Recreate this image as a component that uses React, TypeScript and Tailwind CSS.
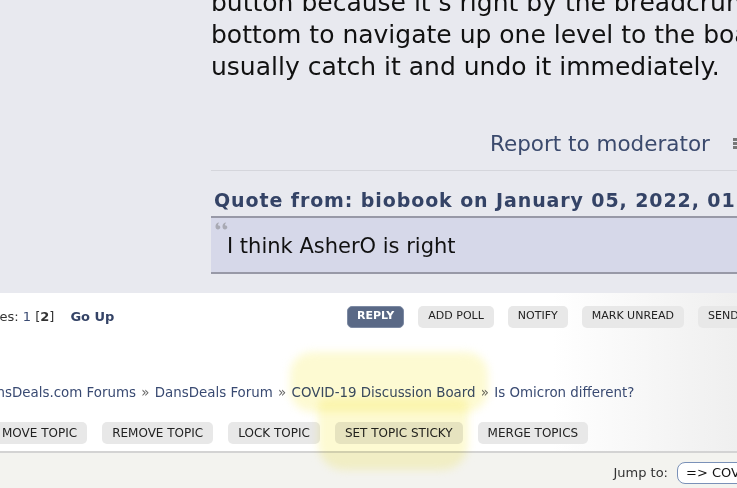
import React from 'react'

const font = { fontFamily: '"DejaVu Sans", Verdana, sans-serif' }

function TopButton({ label, primary }: { label: string; primary?: boolean }) {
  if (primary) {
    return (
      <span className="inline-flex h-[22px] items-center rounded-[5px] border border-[#7d8aa3] bg-[#5a6986] px-[9px] text-[11px] font-bold text-white">
        {label}
      </span>
    )
  }
  return (
    <span className="inline-flex h-[22px] items-center rounded-[5px] bg-[#e8e8e8] px-[10px] text-[11px] text-[#222]">
      {label}
    </span>
  )
}

function ModButton({ label }: { label: string }) {
  return (
    <span className="inline-flex h-[22px] shrink-0 items-center rounded-[5px] bg-[#e8e8e8] px-[10px] text-[12px] text-[#222]">
      {label}
    </span>
  )
}

function QuoteIcon() {
  return (
    <svg width="15" height="8" viewBox="0 0 15 8" fill="#a9aab4">
      <path d="M3.5 0.5 C1.5 1 0.5 2.5 0.5 4.5 C0.5 6.2 1.5 7.5 3 7.5 C4.3 7.5 5.3 6.6 5.3 5.3 C5.3 4 4.3 3.2 3 3.2 C3 2 3.4 1.3 4.2 1 Z" />
      <path d="M10.5 0.5 C8.5 1 7.5 2.5 7.5 4.5 C7.5 6.2 8.5 7.5 10 7.5 C11.3 7.5 12.3 6.6 12.3 5.3 C12.3 4 11.3 3.2 10 3.2 C10 2 10.4 1.3 11.2 1 Z" />
    </svg>
  )
}

export default function App() {
  return (
    <div className="relative h-[488px] w-[737px] overflow-hidden bg-white" style={font}>
      {/* post body */}
      <div className="flex h-[293px] bg-[#e8e9ef]">
        <div className="w-[211px] shrink-0" />
        <div className="min-w-0 flex-1">
          <div className="-mt-[13px] whitespace-nowrap text-[25px] leading-[32px] text-[#111]">
            <div>button because it’s right by the breadcrumbs at the</div>
            <div>bottom to navigate up one level to the board. I</div>
            <div>usually catch it and undo it immediately.</div>
          </div>

          <div className="mt-[48px] flex items-center gap-[23px] whitespace-nowrap pl-[279px] text-[21.5px] leading-[25px] text-[#3b4a6d]">
            <span>Report to moderator</span>
            <span className="flex flex-col gap-[1px]">
              <span className="h-[3px] w-[10px] bg-[#777]" />
              <span className="h-[3px] w-[10px] bg-[#777]" />
              <span className="h-[3px] w-[10px] bg-[#777]" />
            </span>
          </div>

          <div className="mt-[14px] h-px w-[600px] bg-[#d5d6dc]" />

          <div className="mt-[18px] whitespace-nowrap pl-[3px] text-[19px] font-bold leading-[23px] tracking-[0.9px] text-[#344366]">
            Quote from: biobook on January 05, 2022, 01:34:12 PM
          </div>

          <div className="mt-[4px] w-[600px] border-y-2 border-[#9899a7] bg-[#d6d8e9] pb-[13px] pl-[4px] pt-[4px]">
            <QuoteIcon />
            <div className="mt-[4px] pl-[12px] text-[21px] leading-[25px] text-[#111]">
              I think AsherO is right
            </div>
          </div>
        </div>
      </div>

      {/* pages + buttons */}
      <div className="bg-gradient-to-r from-white from-75% to-[#efefef]">
        <div className="flex h-[46px] items-center whitespace-nowrap pt-[1px] text-[13px]">
          <div className="-ml-[24px] w-[371px] shrink-0 text-[#333]">
            Pages: <span className="text-[#394a72]">1</span> [<b>2</b>]
            <span className="ml-[16px] font-bold text-[#344366]">Go Up</span>
          </div>
          <div className="flex gap-[14px]">
            <TopButton label="REPLY" primary />
            <TopButton label="ADD POLL" />
            <TopButton label="NOTIFY" />
            <TopButton label="MARK UNREAD" />
            <TopButton label="SEND THIS TOPIC" />
          </div>
        </div>

        <div className="mt-[46px] -ml-[22px] whitespace-nowrap text-[13.4px] leading-[16px] text-[#394a72]">
          DansDeals.com Forums <span className="mx-px text-[#666]">»</span> DansDeals Forum{' '}
          <span className="mx-px text-[#666]">»</span> COVID-19 Discussion Board{' '}
          <span className="mx-px text-[#666]">»</span> Is Omicron different?
        </div>

        <div className="mt-[21px] flex gap-[15px] pb-[7px] -ml-[8px]">
          <ModButton label="MOVE TOPIC" />
          <ModButton label="REMOVE TOPIC" />
          <ModButton label="LOCK TOPIC" />
          <ModButton label="SET TOPIC STICKY" />
          <ModButton label="MERGE TOPICS" />
        </div>
      </div>

      {/* footer */}
      <div className="flex h-[40px] items-center justify-end border-t-2 border-[#d3d3d3] bg-[#f3f3ef] pt-[2px]">
        <span className="mr-[9px] text-[13px] text-[#333]">Jump to:</span>
        <span className="flex h-[22px] w-[120px] shrink-0 -mr-[60px] items-center rounded-[8px] border-[1.5px] border-[#7a91b8] bg-white px-[8px] text-[13px] text-[#111] whitespace-nowrap">
          =&gt; COVID-19 Discussion Board
        </span>
      </div>

      {/* yellow highlighter mark */}
      <div className="pointer-events-none absolute left-[290px] top-[352px] h-[60px] w-[198px] rounded-[22px] bg-[#fdfad2] mix-blend-multiply blur-[4px]" />
      <div className="pointer-events-none absolute left-[318px] top-[398px] h-[72px] w-[150px] rounded-b-[26px] rounded-t-[8px] bg-[#fdfad2] mix-blend-multiply blur-[4px]" />
    </div>
  )
}
